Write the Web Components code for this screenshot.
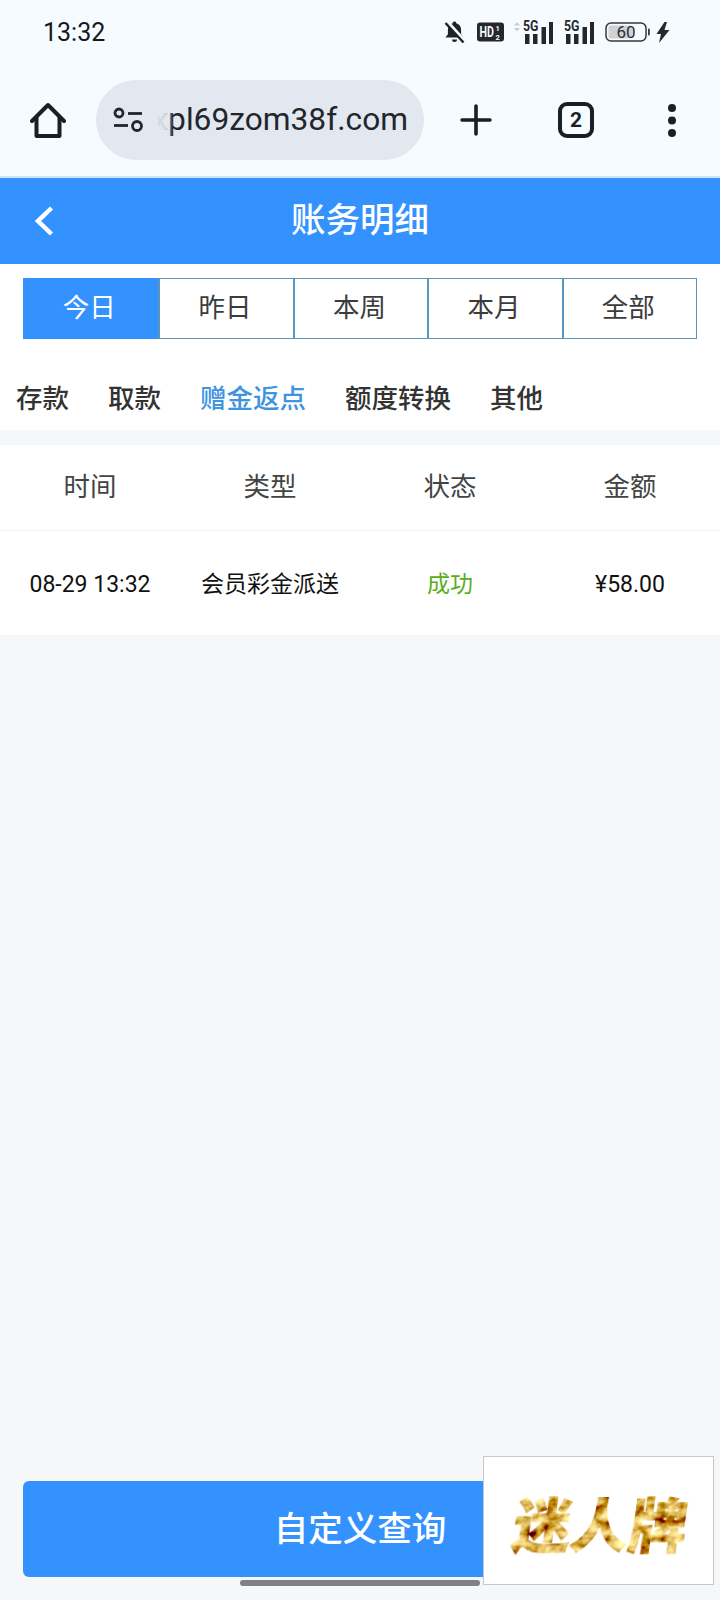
<!DOCTYPE html>
<html lang="zh">
<head>
<meta charset="utf-8">
<title>账务明细</title>
<style>
html, body { margin: 0; padding: 0; }
body { width: 720px; height: 1600px; overflow: hidden; font-family: Roboto, "Noto Sans CJK SC", sans-serif; background: #f5f7f9; }
app-shell { height: 1600px; }
</style>
</head>
<body>
<app-shell>
  <status-bar time="13:32" battery="60"></status-bar>
  <browser-bar url="xpl69zom38f.com" tabs="2"></browser-bar>
  <page-header title="账务明细"></page-header>
  <range-tabs active="0">
    <button>今日</button><button>昨日</button><button>本周</button><button>本月</button><button>全部</button>
  </range-tabs>
  <type-tabs active="2">
    <span>存款</span><span>取款</span><span>赠金返点</span><span>额度转换</span><span>其他</span>
  </type-tabs>
  <record-table></record-table>
  <query-button>自定义查询</query-button>
  <float-ad>迷人牌</float-ad>
  <home-bar></home-bar>
</app-shell>

<script>
class AppShell extends HTMLElement {
    constructor() {
        super();
        this.attachShadow({ mode: 'open' }).innerHTML = `
        <style>
        :host { display:flex; flex-direction:column; position:relative; background:#f5f7f9; }
        </style>
        <slot></slot>`;
    }
}

class StatusBar extends HTMLElement {
    constructor() {
        super();
        const signal = (arrows) => `
        <svg class="sig" width="${arrows ? 40 : 30}" height="27" viewBox="0 -3 ${arrows ? 40 : 30} 27">
            ${arrows ? '<path d="M1 5.500l3-3.500 3 3.500zM1 8l3 3.500 3-3.500z" fill="#c9ced4"/>' : ''}
            <g transform="translate(${arrows ? 10 : 0} 0)" fill="#24282c">
                <text transform="translate(0 10.500) scale(.88 1)" font-family="Roboto" font-size="14" font-weight="700">5G</text>
                <rect x="2" y="14" width="4.500" height="10"/><rect x="10" y="14" width="4.500" height="10"/>
                <rect x="18.500" y="7" width="4.500" height="17"/><rect x="26" y="2" width="4" height="22"/>
            </g>
        </svg>`;
        this.attachShadow({ mode: 'open' }).innerHTML = `
        <style>
        :host { display:flex; align-items:center; height:60px; padding:4px 0 0 43px; box-sizing:border-box; background:#f6fbff; color:#16191c; }
        .time { font:400 25px/1 Roboto, sans-serif; }
        .icons { display:flex; align-items:center; margin-left:auto; margin-right:50px; }
        svg { display:block; }
        .sig { margin-top:-3px; }
        .bell { margin-right:11px; }
        .hd { margin-right:9px; }
        .s1 { margin-right:11px; }
        .s2 { margin-right:11px; }
        .bat { margin-right:6px; }
        </style>
        <span class="time">${this.getAttribute('time')}</span>
        <div class="icons">
            <svg class="bell" width="23" height="24" viewBox="0 0 22 24">
                <path d="M11 1.500c1 0 1.700.7 1.800 1.700 3 .8 4.800 3.300 4.800 6.500v4.500l2.400 3.300H2l2.400-3.300V9.700c0-3.200 1.800-5.700 4.800-6.500.1-1 .8-1.700 1.800-1.700z" fill="#1f2327"/>
                <path d="M8.500 19.500h5a2.500 2.500 0 0 1-5 0z" fill="#1f2327"/>
                <path d="M3.500 1.500l18 20" stroke="#f6fbff" stroke-width="3.500"/>
                <path d="M2 3l18 19.500" stroke="#1f2327" stroke-width="2.400"/>
            </svg>
            <svg class="hd" width="27" height="20" viewBox="0 0 27 20">
                <rect width="27" height="19" y=".5" rx="3" fill="#24282c"/>
                <text transform="translate(2.500 15) scale(.76 1)" font-family="Roboto" font-size="14" font-weight="700" fill="#f6fbff">HD</text>
                <text x="18.500" y="8.500" font-family="Roboto" font-size="7.500" font-weight="700" fill="#f6fbff">1</text>
                <text x="18.500" y="18" font-family="Roboto" font-size="7.500" font-weight="700" fill="#f6fbff">2</text>
            </svg>
            <span class="s1">${signal(true)}</span>
            <span class="s2">${signal(false)}</span>
            <svg class="bat" width="45" height="20" viewBox="0 0 45 20">
                <rect x="1" y="1" width="40" height="18" rx="5" fill="none" stroke="#33383d" stroke-width="1.500"/>
                <rect x="3.500" y="3.500" width="24" height="13" rx="2" fill="#cfd2d6"/>
                <rect x="43" y="6.500" width="1.800" height="7" rx=".9" fill="#33383d"/>
                <text x="21" y="16" text-anchor="middle" font-family="Roboto" font-size="17" fill="#2b2f33">${this.getAttribute('battery')}</text>
            </svg>
            <svg width="14" height="21" viewBox="0 0 14 21"><path d="M8.500 0L.5 12h4.500L3 21l10.500-13H8.500L11 0z" fill="#24282c"/></svg>
        </div>`;
    }
}

class BrowserBar extends HTMLElement {
    constructor() {
        super();
        this.attachShadow({ mode: 'open' }).innerHTML = `
        <style>
        :host { display:flex; align-items:center; height:116px; padding:4px 0 0 30px; box-sizing:border-box; background:#f6fbff; }
        svg { display:block; flex:none; }
        .pill { display:flex; align-items:center; width:328px; height:80px; margin:0 36px 0 30px; padding-left:17px; box-sizing:border-box; border-radius:40px; background:#e2e7f0; }
        .url { position:relative; width:250px; margin-left:15px; overflow:hidden; white-space:nowrap; direction:rtl; font:400 31.700px/1.2 Roboto, sans-serif; color:#22262b; }
        .url::before { content:""; position:absolute; left:0; top:0; bottom:0; width:15px; background:linear-gradient(90deg,rgba(226,231,240,.92) 50%,rgba(226,231,240,0)); }
        .url bdi { direction:ltr; }
        .tabs { display:flex; align-items:center; justify-content:center; width:36px; height:36px; margin:0 74px 0 66px; box-sizing:border-box; border:4px solid #1b1f23; border-radius:9px; font:700 21px/1 Roboto, sans-serif; color:#1b1f23; }
        </style>
        <svg width="36" height="36" viewBox="0 0 36 36" fill="none" stroke="#1b1f23" stroke-width="4" stroke-linejoin="round" stroke-linecap="round">
            <path d="M2 19L18 3l16 16"/><path d="M6.500 15.500V34h23V15.500"/>
        </svg>
        <div class="pill">
            <svg width="30" height="26" viewBox="0 0 30 26" fill="none" stroke="#22262b" stroke-width="2.800">
                <circle cx="6" cy="6" r="4"/><path d="M15 6.500h14"/>
                <path d="M1 18.500h14"/><circle cx="24" cy="19" r="4.500"/>
            </svg>
            <span class="url"><bdi>${this.getAttribute('url')}</bdi></span>
        </div>
        <svg width="32" height="32" viewBox="0 0 32 32" stroke="#1b1f23" stroke-width="3.600" stroke-linecap="round">
            <path d="M2 16h28M16 2v28"/>
        </svg>
        <span class="tabs">${this.getAttribute('tabs')}</span>
        <svg width="8" height="33" viewBox="0 0 8 33" fill="#1b1f23">
            <circle cx="4" cy="4" r="4"/><circle cx="4" cy="16.500" r="4"/><circle cx="4" cy="29" r="4"/>
        </svg>`;
    }
}

class PageHeader extends HTMLElement {
    constructor() {
        super();
        this.attachShadow({ mode: 'open' }).innerHTML = `
        <style>
        :host { display:flex; align-items:center; justify-content:center; position:relative; height:88px; padding-bottom:8px; box-sizing:border-box; border-top:2px solid #cfe4f8; background:#3492ff; color:#fff; }
        h1 { margin:0; font:500 34.500px/1 "Noto Sans CJK SC", sans-serif; }
        svg { position:absolute; left:33px; top:27px; }
        </style>
        <svg width="22" height="32" viewBox="0 0 22 32" fill="none" stroke="#fff" stroke-width="4.500"><path d="M18.500 3L5 16l13.500 13"/></svg>
        <h1>${this.getAttribute('title')}</h1>`;
    }
}

class RangeTabs extends HTMLElement {
    constructor() {
        super();
        this.attachShadow({ mode: 'open' }).innerHTML = `
        <style>
        :host { display:block; padding:14px 23px 0; background:#fff; }
        .row { display:grid; grid-template-columns:repeat(5,1fr); height:61px; box-sizing:border-box; border:1px solid #5a96bb; }
        ::slotted(button) { padding:0 3px 4px 0; border:0; border-left:2px solid #5a96bb; background:#fff; font:400 26.500px/1 "Noto Sans CJK SC", sans-serif; color:#3c3c3c; }
        ::slotted(button:first-child) { border-left:0; }
        ::slotted(button.on) { margin:-1px 0 -1px -1px; background:#3492ff; color:#fff; }
        </style>
        <div class="row"><slot></slot></div>`;
    }
    connectedCallback() {
        this.children[+this.getAttribute('active')].classList.add('on');
    }
}

class TypeTabs extends HTMLElement {
    constructor() {
        super();
        this.attachShadow({ mode: 'open' }).innerHTML = `
        <style>
        :host { display:flex; gap:39px; align-items:center; height:91px; padding:26px 0 0 16px; box-sizing:border-box; background:#fff; }
        ::slotted(span) { font:500 26.500px/1 "Noto Sans CJK SC", sans-serif; color:#333; }
        ::slotted(span.on) { color:#3f94e0; }
        </style>
        <slot></slot>`;
    }
    connectedCallback() {
        this.children[+this.getAttribute('active')].classList.add('on');
    }
}

class RecordTable extends HTMLElement {
    constructor() {
        super();
        this.attachShadow({ mode: 'open' }).innerHTML = `
        <style>
        :host { display:block; margin-top:15px; background:#fff; }
        .row { display:grid; grid-template-columns:repeat(4,1fr); align-items:center; text-align:center; box-sizing:border-box; }
        .head { height:86px; padding-bottom:4px; border-bottom:1px solid #f1f2f4; font:400 26.500px/1 "Noto Sans CJK SC", sans-serif; color:#444; }
        .body { height:104px; padding-top:2px; font:400 23px/1 Roboto, "Noto Sans CJK SC", sans-serif; color:#111; }
        .ok { color:#5aad20; }
        </style>
        <div class="row head"><span>时间</span><span>类型</span><span>状态</span><span>金额</span></div>
        <div class="row body"><span>08-29 13:32</span><span>会员彩金派送</span><span class="ok">成功</span><span>¥58.00</span></div>`;
    }
}

class QueryButton extends HTMLElement {
    constructor() {
        super();
        this.attachShadow({ mode: 'open' }).innerHTML = `
        <style>
        :host { display:flex; align-items:center; justify-content:center; height:96px; padding-bottom:6px; box-sizing:border-box; margin:auto 23px 23px; border-radius:6px; background:#3492ff; color:#fff; font:500 34.500px/1 "Noto Sans CJK SC", sans-serif; }
        </style>
        <slot></slot>`;
    }
}

class FloatAd extends HTMLElement {
    constructor() {
        super();
        this.attachShadow({ mode: 'open' }).innerHTML = `
        <style>
        :host { display:flex; align-items:center; justify-content:center; position:absolute; left:483px; top:1456px; width:231px; height:129px; box-sizing:border-box; border:1px solid #c6c8cb; background:#fff; }
        .gold { font:900 58px/1 "Noto Sans CJK SC", sans-serif; white-space:nowrap; transform:skewX(-8deg); margin:2px 0 0 6px; color:#c08a1c; -webkit-text-stroke:1px #c08a1c; filter:url(#gold); }
        svg { position:absolute; width:0; height:0; }
        </style>
        <svg aria-hidden="true"><filter id="gold" x="0" y="0" width="100%" height="100%">
            <feTurbulence type="fractalNoise" baseFrequency=".07 .09" numOctaves="3" seed="8" result="n"/>
            <feColorMatrix in="n" type="matrix" values="1.800 0 0 0 -.2  1.900 0 0 0 -.5  1.100 0 0 0 -.46  0 0 0 0 1" result="c"/>
            <feComposite in="c" in2="SourceAlpha" operator="in"/>
        </filter></svg>
        <span class="gold"><slot></slot></span>`;
    }
}

class HomeBar extends HTMLElement {
    constructor() {
        super();
        this.attachShadow({ mode: 'open' }).innerHTML = `
        <style>
        :host { display:block; position:absolute; left:240px; top:1580px; width:240px; height:6px; border-radius:3px; background:#808184; }
        </style>`;
    }
}

customElements.define('app-shell', AppShell);
customElements.define('status-bar', StatusBar);
customElements.define('browser-bar', BrowserBar);
customElements.define('page-header', PageHeader);
customElements.define('range-tabs', RangeTabs);
customElements.define('type-tabs', TypeTabs);
customElements.define('record-table', RecordTable);
customElements.define('query-button', QueryButton);
customElements.define('float-ad', FloatAd);
customElements.define('home-bar', HomeBar);
</script>
</body>
</html>
